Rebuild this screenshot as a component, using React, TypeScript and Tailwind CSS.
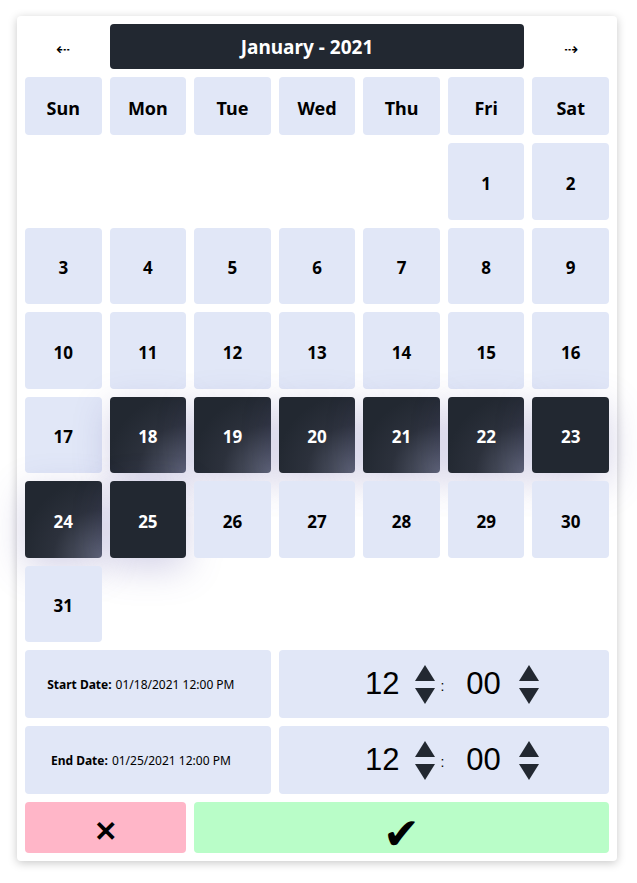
const days = ["Sun", "Mon", "Tue", "Wed", "Thu", "Fri", "Sat"];

const shiny = [18, 19, 20, 21, 22, 24];
const plain = [23, 25];

function DayCell({ n }: { n: number }) {
  if (shiny.includes(n)) {
    return (
      <div className="flex aspect-square items-center justify-center rounded bg-[#222831] bg-[radial-gradient(circle_at_100%_100%,#5c6174_0%,#2c313c_45%,#222831_75%)] pt-1 text-[17px] font-bold text-white shadow-[0_10px_36px_rgba(96,88,170,0.28)]">
        {n}
      </div>
    );
  }
  if (plain.includes(n)) {
    return (
      <div className="flex aspect-square items-center justify-center rounded bg-[#222831] pt-1 text-[17px] font-bold text-white shadow-[0_10px_36px_rgba(96,88,170,0.28)]">
        {n}
      </div>
    );
  }
  return (
    <div className="flex aspect-square items-center justify-center rounded bg-[#e1e7f7] pt-1 text-[17px] font-bold text-black">
      {n}
    </div>
  );
}

function Spinner() {
  return (
    <div className="flex flex-col gap-[7px]">
      <svg width="20" height="16" viewBox="0 0 20 16">
        <path d="M10 0 L20 16 L0 16 Z" fill="#222831" />
      </svg>
      <svg width="20" height="16" viewBox="0 0 20 16">
        <path d="M0 0 L20 0 L10 16 Z" fill="#222831" />
      </svg>
    </div>
  );
}

function TimePicker() {
  return (
    <div className="col-span-4 flex h-[68px] items-center justify-center rounded bg-[#e1e7f7] pl-[16px] font-['Liberation_Sans',Arial,sans-serif] text-black">
      <span className="text-[31px]">12</span>
      <div className="ml-[16px]">
        <Spinner />
      </div>
      <span className="ml-[5px] mt-1 text-[14px]">:</span>
      <span className="ml-[22px] text-[31px]">00</span>
      <div className="ml-[18px]">
        <Spinner />
      </div>
    </div>
  );
}

export default function App() {
  return (
    <div className="min-h-screen bg-white pt-4 font-['Noto_Sans','Open_Sans',sans-serif]">
      <div className="ml-[17px] w-[600px] rounded bg-white p-2 shadow-[0_2px_10px_rgba(0,0,0,0.22)]">
        <div className="grid grid-cols-7 gap-2">

          {/* Month header */}

          <div className="flex h-[45px] items-center justify-center pt-1 text-[17px] text-black">⇠</div>
          <div className="col-span-5 flex h-[45px] items-center justify-center rounded bg-[#222831] pr-5 pt-[2px] text-[19px] font-bold text-white">
            January - 2021
          </div>
          <div className="flex h-[45px] items-center justify-center pt-1 text-[17px] text-black">⇢</div>

          {/* Week days */}

          {days.map((d) => (
            <div
              key={d}
              className="flex h-[58px] items-center justify-center rounded bg-[#e1e7f7] pt-1 text-[18px] font-bold text-black"
            >
              {d}
            </div>
          ))}

          {[0, 1, 2, 3, 4].map((i) => (
            <div key={"e" + i} />
          ))}

          {Array.from({ length: 31 }, (_, i) => (
            <DayCell key={i} n={i + 1} />
          ))}

          {/* Range */}

          <div className="col-span-3 col-start-1 flex h-[68px] items-center justify-center rounded bg-[#e1e7f7] pr-[14px] pt-[2px] text-[12px] text-black">
            <span className="font-bold">Start Date:</span>
            <span className="ml-1">01/18/2021 12:00 PM</span>
          </div>
          <TimePicker />

          <div className="col-span-3 flex h-[68px] items-center justify-center rounded bg-[#e1e7f7] pr-[14px] pt-[2px] text-[12px] text-black">
            <span className="font-bold">End Date:</span>
            <span className="ml-1">01/25/2021 12:00 PM</span>
          </div>
          <TimePicker />

          {/* Actions */}

          <div className="col-span-2 flex h-[51px] items-center justify-center rounded bg-[#ffb6c8] pt-1 text-[28px] font-bold text-black">
            ✕
          </div>
          <div className="col-span-5 flex h-[51px] items-center justify-center rounded bg-[#b9fdc8] pt-2 text-[44px] leading-none text-black">
            ✔
          </div>

        </div>
      </div>
    </div>
  );
}
